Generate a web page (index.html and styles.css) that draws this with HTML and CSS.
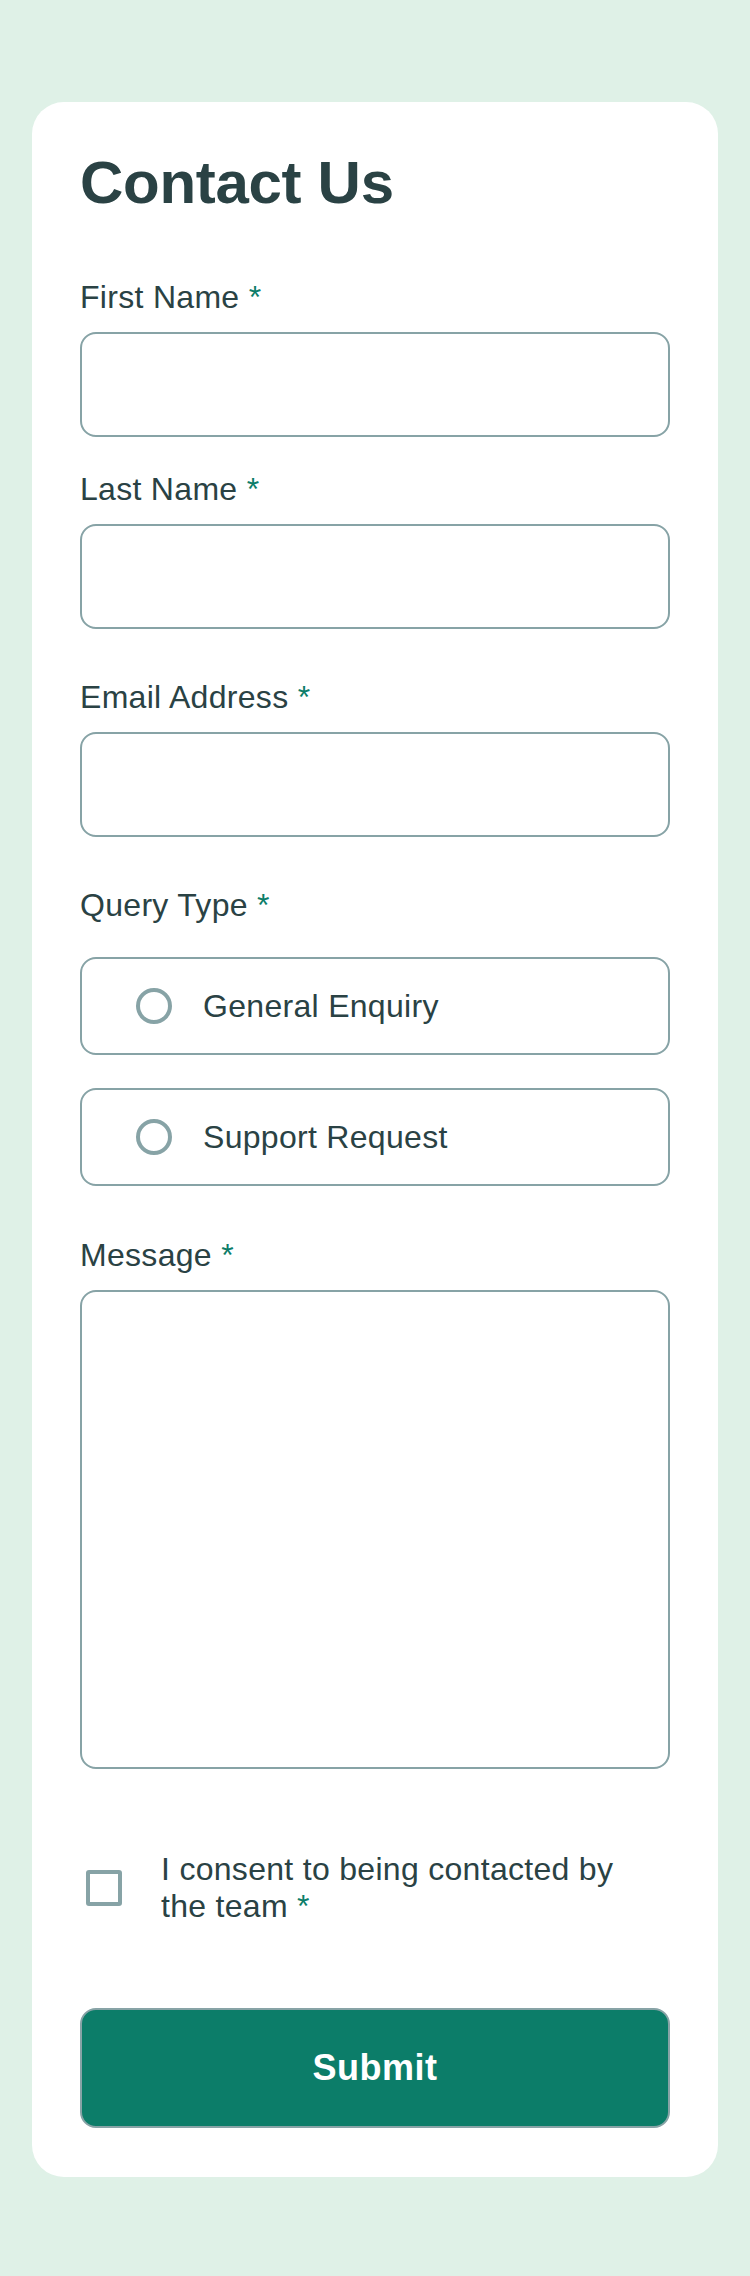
FILE: index.html
```html
<!DOCTYPE html>
<html lang="en">
<head>
<meta charset="utf-8">
<title>Contact Us</title>
<link rel="stylesheet" href="styles.css">
</head>
<body>
<main class="card">
  <h1 class="title">Contact Us</h1>
  <form class="form">
    <div class="names">
      <div class="field">
        <label class="label" for="first">First Name <span class="req">*</span></label>
        <input class="input" id="first" type="text">
      </div>
      <div class="field">
        <label class="label" for="last">Last Name <span class="req">*</span></label>
        <input class="input" id="last" type="text">
      </div>
    </div>
    <div class="field">
      <label class="label" for="email">Email Address <span class="req">*</span></label>
      <input class="input" id="email" type="email">
    </div>
    <div class="query" role="radiogroup" aria-labelledby="qt">
      <div class="label" id="qt">Query Type <span class="req">*</span></div>
      <div class="options">
        <label class="option"><input class="radio" type="radio" name="q"><span class="option-text">General Enquiry</span></label>
        <label class="option"><input class="radio" type="radio" name="q"><span class="option-text">Support Request</span></label>
      </div>
    </div>
    <div class="field field-msg">
      <label class="label" for="msg">Message <span class="req">*</span></label>
      <textarea class="textarea" id="msg"></textarea>
    </div>
    <label class="consent"><input class="check" type="checkbox"><span class="consent-text">I consent to being contacted by the team <span class="req">*</span></span></label>
    <button class="submit" type="button">Submit</button>
  </form>
</main>
</body>
</html>
```

FILE: styles.css
```css
* { box-sizing: border-box; }

body {
  margin: 0;
  padding: 102px 32px 100px;
  background: #dff1e7;
  font-family: "Liberation Sans", Arial, sans-serif;
  color: #2a4244;
}

.card {
  background: #ffffff;
  border-radius: 32px;
  padding: 48px 48px 49px;
}

.title {
  margin: 0 0 63px;
  font-size: 60px;
  line-height: 66px;
  font-weight: 700;
  letter-spacing: -0.3px;
  color: #2a4244;
}

.form {
  display: flex;
  flex-direction: column;
  gap: 50px;
}

.names {
  display: flex;
  flex-direction: column;
  gap: 34px;
}

.field {
  display: flex;
  flex-direction: column;
  gap: 17px;
}

.field-msg { margin-top: 1px; }

.label {
  display: block;
  font-size: 32px;
  line-height: 36px;
  letter-spacing: 0.3px;
  color: #2a4244;
}

.req { color: #0c7d69; }

.input {
  display: block;
  width: 100%;
  height: 105px;
  border: 2px solid #87a3a6;
  border-radius: 16px;
  background: #fff;
  font: inherit;
  font-size: 32px;
  padding: 0 30px;
  outline: none;
}

.query .label { margin-bottom: 34px; }

.options {
  display: flex;
  flex-direction: column;
  gap: 33px;
}

.option {
  display: flex;
  align-items: center;
  gap: 31px;
  height: 98px;
  border: 2px solid #87a3a6;
  border-radius: 16px;
  padding-left: 54px;
}

.radio {
  appearance: none;
  -webkit-appearance: none;
  margin: 0;
  width: 36px;
  height: 36px;
  border: 4px solid #87a3a6;
  border-radius: 50%;
  flex: none;
}

.option-text {
  font-size: 32px;
  line-height: 36px;
  letter-spacing: 0.3px;
  color: #2a4244;
}

.textarea {
  display: block;
  width: 100%;
  height: 479px;
  border: 2px solid #87a3a6;
  border-radius: 16px;
  resize: none;
  font: inherit;
  outline: none;
}

.consent {
  display: flex;
  align-items: center;
  gap: 39px;
  margin-top: 32px;
  padding-left: 6px;
}

.check {
  appearance: none;
  -webkit-appearance: none;
  margin: 0;
  width: 36px;
  height: 36px;
  border: 4px solid #87a3a6;
  border-radius: 3px;
  flex: none;
}

.consent-text {
  font-size: 32px;
  line-height: 37px;
  letter-spacing: 0.3px;
  max-width: 480px;
  color: #2a4244;
}

.submit {
  margin-top: 33px;
  height: 120px;
  width: 100%;
  border: 2px solid #87a3a6;
  border-radius: 16px;
  background: #0c7d69;
  color: #ffffff;
  font-family: "Liberation Sans", Arial, sans-serif;
  font-size: 36px;
  font-weight: 700;
  letter-spacing: 0.5px;
}
```
